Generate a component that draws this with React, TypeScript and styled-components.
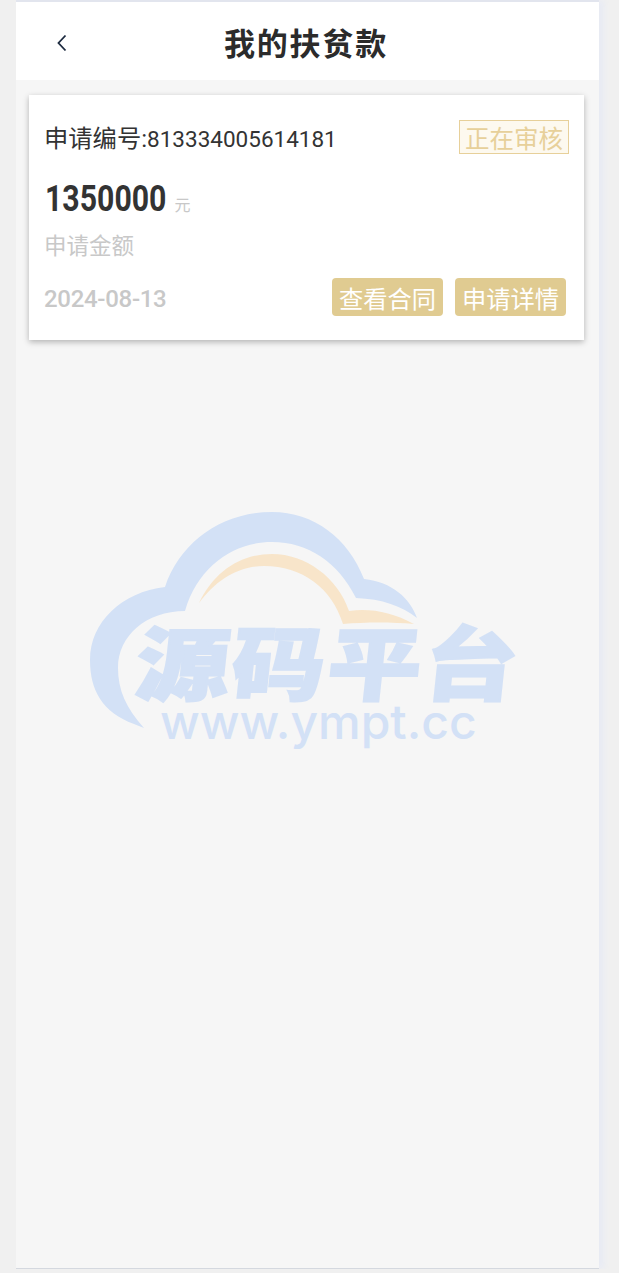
import styled, { createGlobalStyle } from "styled-components";

const GlobalStyle = createGlobalStyle`
  html, body {
    margin: 0;
    padding: 0;
    background: #f0f0f0;
    font-family: "Roboto", "Noto Sans CJK SC", sans-serif;
  }
`;

function WatermarkLogo() {
  return (
    <Watermark>
      <svg width="450" height="260" viewBox="0 0 450 260">
        <path
          d="M54 224 C22 212 10 190 10 160 C10 122 42 92 85 87 C100 42 142 12 192 12 C234 12 268 38 284 79 C312 82 330 98 337 118 C322 106 302 99 276 98 C258 62 228 42 192 42 C154 42 118 66 105 111 C66 111 38 136 38 168 C38 190 46 208 64 228 Z"
          fill="#d3e1f6"
        />
        <path
          d="M119 103 C134 72 160 54 192 54 C226 54 258 78 269 111 C290 108 312 112 334 124 C312 122 286 122 263 124 C252 88 222 66 184 66 C158 66 136 80 119 103 Z"
          fill="#f8e5ca"
        />
      </svg>
      <LogoTitle>源码平台</LogoTitle>
      <LogoUrl>www.ympt.cc</LogoUrl>
    </Watermark>
  );
}

export default function App() {
  return (
    <>
      <GlobalStyle />
      <Page>
        <Header>
          <BackButton aria-label="back">
            <svg width="12" height="18" viewBox="0 0 12 18">
              <path d="M9.5 1.5 L2.5 9 L9.5 16.5" fill="none" stroke="#1c2a3f" strokeWidth="1.8" />
            </svg>
          </BackButton>
          <Title>我的扶贫款</Title>
        </Header>

        <Content>
          <Card>
            <TopRow>
              <OrderNo>
                申请编号:<OrderDigits>813334005614181</OrderDigits>
              </OrderNo>
              <Status>正在审核</Status>
            </TopRow>
            <Amount>
              <AmountValue>1350000</AmountValue>
              <Unit>元</Unit>
            </Amount>
            <AmountLabel>申请金额</AmountLabel>
            <BottomRow>
              <DateText>2024-08-13</DateText>
              <Actions>
                <ActionButton>查看合同</ActionButton>
                <ActionButton>申请详情</ActionButton>
              </Actions>
            </BottomRow>
          </Card>
          <WatermarkLogo />
        </Content>
      </Page>
    </>
  );
}

const Page = styled.div`
  box-sizing: border-box;
  width: 583px;
  height: 1269px;
  margin: 0 0 0 16px;
  display: flex;
  flex-direction: column;
  background: #f6f6f6;
  border-top: 2px solid #e2e5ee;
  border-bottom: 1px solid #d4d8df;
  box-shadow: 5px 0 6px #e8ebf4, 0 4px 0 #e6e9f3;
`;

const Header = styled.header`
  position: relative;
  height: 78px;
  flex-shrink: 0;
  display: flex;
  align-items: center;
  justify-content: center;
  background: #fff;
`;

const BackButton = styled.button`
  position: absolute;
  left: 40px;
  top: 32px;
  padding: 0;
  border: 0;
  background: none;
  line-height: 0;
`;

const Title = styled.h1`
  margin: 0 3px 0 0;
  font-size: 31px;
  font-weight: 700;
  letter-spacing: 1.8px;
  color: #2b2b2b;
`;

const Content = styled.main`
  position: relative;
  flex: 1;
  padding: 15px 15px 0 13px;
`;

const Card = styled.section`
  height: 245px;
  box-sizing: border-box;
  padding: 25px 15px 0 15px;
  background: #fff;
  box-shadow: 0 2px 6px rgba(0, 0, 0, 0.28);
`;

const TopRow = styled.div`
  display: flex;
  justify-content: space-between;
  align-items: center;
  height: 34px;
`;

const OrderNo = styled.div`
  padding-top: 3px;
  font-size: 24.3px;
  line-height: 34px;
  color: #333;
`;

const OrderDigits = styled.span`
  font-size: 22.5px;
`;

const Status = styled.div`
  box-sizing: border-box;
  width: 110px;
  height: 34px;
  display: flex;
  align-items: center;
  justify-content: center;
  font-size: 24.5px;
  color: #e7d09a;
  background: #fdf9ef;
  border: 1px solid #e7d09a;
`;

const Amount = styled.div`
  margin-top: 21px;
  line-height: 48px;
`;

const AmountValue = styled.span`
  display: inline-block;
  margin-left: 1px;
  margin-right: -22px;
  font-size: 36px;
  font-weight: 700;
  color: #333;
  transform-origin: left center;
  transform: scaleX(0.84);
`;

const Unit = styled.span`
  margin-left: 7px;
  font-family: "Noto Sans CJK SC", sans-serif;
  font-size: 16px;
  color: #c8c8c8;
`;

const AmountLabel = styled.div`
  margin-top: 1px;
  font-size: 22.5px;
  line-height: 30px;
  color: #c8c8c8;
`;

const BottomRow = styled.div`
  margin-top: 17px;
  display: flex;
  justify-content: space-between;
  align-items: center;
`;

const DateText = styled.div`
  margin-top: 3px;
  font-size: 24px;
  font-weight: 500;
  letter-spacing: -0.3px;
  color: #c8c8c8;
`;

const Actions = styled.div`
  display: flex;
  gap: 12px;
  margin-right: 3px;
`;

const ActionButton = styled.button`
  width: 111px;
  height: 38px;
  padding: 0;
  border: 0;
  border-radius: 4px;
  font-family: inherit;
  font-size: 24.3px;
  color: #fff;
  background: #e0cb91;
`;

const Watermark = styled.div`
  position: absolute;
  left: 64px;
  top: 420px;
  width: 450px;
  height: 260px;
  pointer-events: none;
`;

const LogoTitle = styled.div`
  position: absolute;
  left: 56px;
  top: 117px;
  font-size: 80px;
  line-height: 100px;
  font-weight: 900;
  letter-spacing: 2px;
  color: #d3e1f6;
  -webkit-text-stroke: 2px #d3e1f6;
  white-space: nowrap;
  transform-origin: left center;
  transform: skewX(-6deg) scaleX(1.17);
`;

const LogoUrl = styled.div`
  position: absolute;
  left: 80px;
  top: 192px;
  font-family: "Inter", "Liberation Sans", sans-serif;
  font-weight: 500;
  font-size: 48px;
  line-height: 60px;
  color: #d3e1f6;
  white-space: nowrap;
`;
